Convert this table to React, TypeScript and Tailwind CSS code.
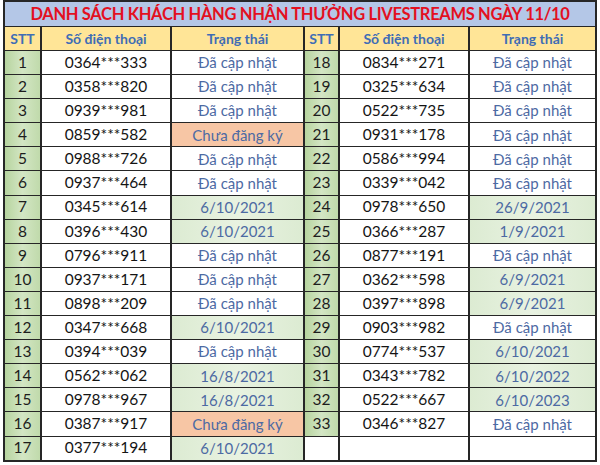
type Status = { text: string; kind: "ok" | "date" | "none" };

type Row = { stt: number | null; phone: string; status: Status };

const ok: Status = { text: "Đã cập nhật", kind: "ok" };
const none: Status = { text: "Chưa đăng ký", kind: "none" };
const d = (text: string): Status => ({ text, kind: "date" });

const LEFT: Row[] = [
  { stt: 1, phone: "0364***333", status: ok },
  { stt: 2, phone: "0358***820", status: ok },
  { stt: 3, phone: "0939***981", status: ok },
  { stt: 4, phone: "0859***582", status: none },
  { stt: 5, phone: "0988***726", status: ok },
  { stt: 6, phone: "0937***464", status: ok },
  { stt: 7, phone: "0345***614", status: d("6/10/2021") },
  { stt: 8, phone: "0396***430", status: d("6/10/2021") },
  { stt: 9, phone: "0796***911", status: ok },
  { stt: 10, phone: "0937***171", status: ok },
  { stt: 11, phone: "0898***209", status: ok },
  { stt: 12, phone: "0347***668", status: d("6/10/2021") },
  { stt: 13, phone: "0394***039", status: ok },
  { stt: 14, phone: "0562***062", status: d("16/8/2021") },
  { stt: 15, phone: "0978***967", status: d("16/8/2021") },
  { stt: 16, phone: "0387***917", status: none },
  { stt: 17, phone: "0377***194", status: d("6/10/2021") },
];

const RIGHT: Row[] = [
  { stt: 18, phone: "0834***271", status: ok },
  { stt: 19, phone: "0325***634", status: ok },
  { stt: 20, phone: "0522***735", status: ok },
  { stt: 21, phone: "0931***178", status: ok },
  { stt: 22, phone: "0586***994", status: ok },
  { stt: 23, phone: "0339***042", status: ok },
  { stt: 24, phone: "0978***650", status: d("26/9/2021") },
  { stt: 25, phone: "0366***287", status: d("1/9/2021") },
  { stt: 26, phone: "0877***191", status: ok },
  { stt: 27, phone: "0362***598", status: d("6/9/2021") },
  { stt: 28, phone: "0397***898", status: d("6/9/2021") },
  { stt: 29, phone: "0903***982", status: ok },
  { stt: 30, phone: "0774***537", status: d("6/10/2021") },
  { stt: 31, phone: "0343***782", status: d("6/10/2022") },
  { stt: 32, phone: "0522***667", status: d("6/10/2023") },
  { stt: 33, phone: "0346***827", status: ok },
  { stt: null, phone: "", status: { text: "", kind: "ok" } },
];

const STATUS_BG: Record<Status["kind"], string> = {
  ok: "bg-white",
  date: "bg-[linear-gradient(90deg,#dcebd2,#e8f2e1_50%,#dcebd2)]",
  none: "bg-[#f7c6a5]",
};

function Cells({ row, last }: { row: Row; last: boolean }) {
  const rb = last ? "" : "border-r-2";
  return (
    <>
      <div
        className={`flex items-center justify-center border-r-2 border-b border-[#262626] text-[15.5px] text-[#1d1d1d] ${
          row.stt === null ? "bg-white" : "bg-[linear-gradient(90deg,#b7d49f,#d3e6c4_50%,#c0daab)]"
        }`}
      >
        {row.stt}
      </div>
      <div className="flex items-center justify-center border-r-2 border-b border-[#262626] bg-white text-[15.5px] text-[#141414]">
        {row.phone}
      </div>
      <div
        className={`flex items-center justify-center ${rb} border-b border-[#262626] text-[15px] text-[#4d6aa3] ${STATUS_BG[row.status.kind]}`}
      >
        {row.status.text}
      </div>
    </>
  );
}

export default function App() {
  const headers = ["STT", "Số điện thoại", "Trạng thái", "STT", "Số điện thoại", "Trạng thái"];
  return (
    <div className="h-[465px] w-[600px] bg-white pl-[3px]" style={{ fontFamily: "Lato, 'Open Sans', sans-serif" }}>
      <div className="w-[594px] border-2 border-b border-[#262626]">
        <div className="flex h-[25px] items-center justify-center overflow-hidden whitespace-nowrap border-b border-[#262626] bg-[#b4c7e7] text-[16.5px] font-bold tracking-[-0.02em] text-[#e3101f]">
          DANH SÁCH KHÁCH HÀNG NHẬN THƯỞNG LIVESTREAMS NGÀY 11/10
        </div>
        <div className="grid grid-cols-[37px_130px_133px_35px_130px_1fr] grid-rows-[24px_repeat(17,24.1px)]">
          {headers.map((h, i) => (
            <div
              key={i}
              className={`flex items-center justify-center ${i === 5 ? "" : "border-r-2"} border-b border-[#262626] bg-[#ffe597] text-[14px] font-bold text-[#3f6db5]`}
            >
              {h}
            </div>
          ))}
          {LEFT.map((l, i) => (
            <Row2 key={i} left={l} right={RIGHT[i]} />
          ))}
        </div>
      </div>
    </div>
  );
}

function Row2({ left, right }: { left: Row; right: Row; key?: number }) {
  return (
    <>
      <Cells row={left} last={false} />
      <Cells row={right} last={true} />
    </>
  );
}
